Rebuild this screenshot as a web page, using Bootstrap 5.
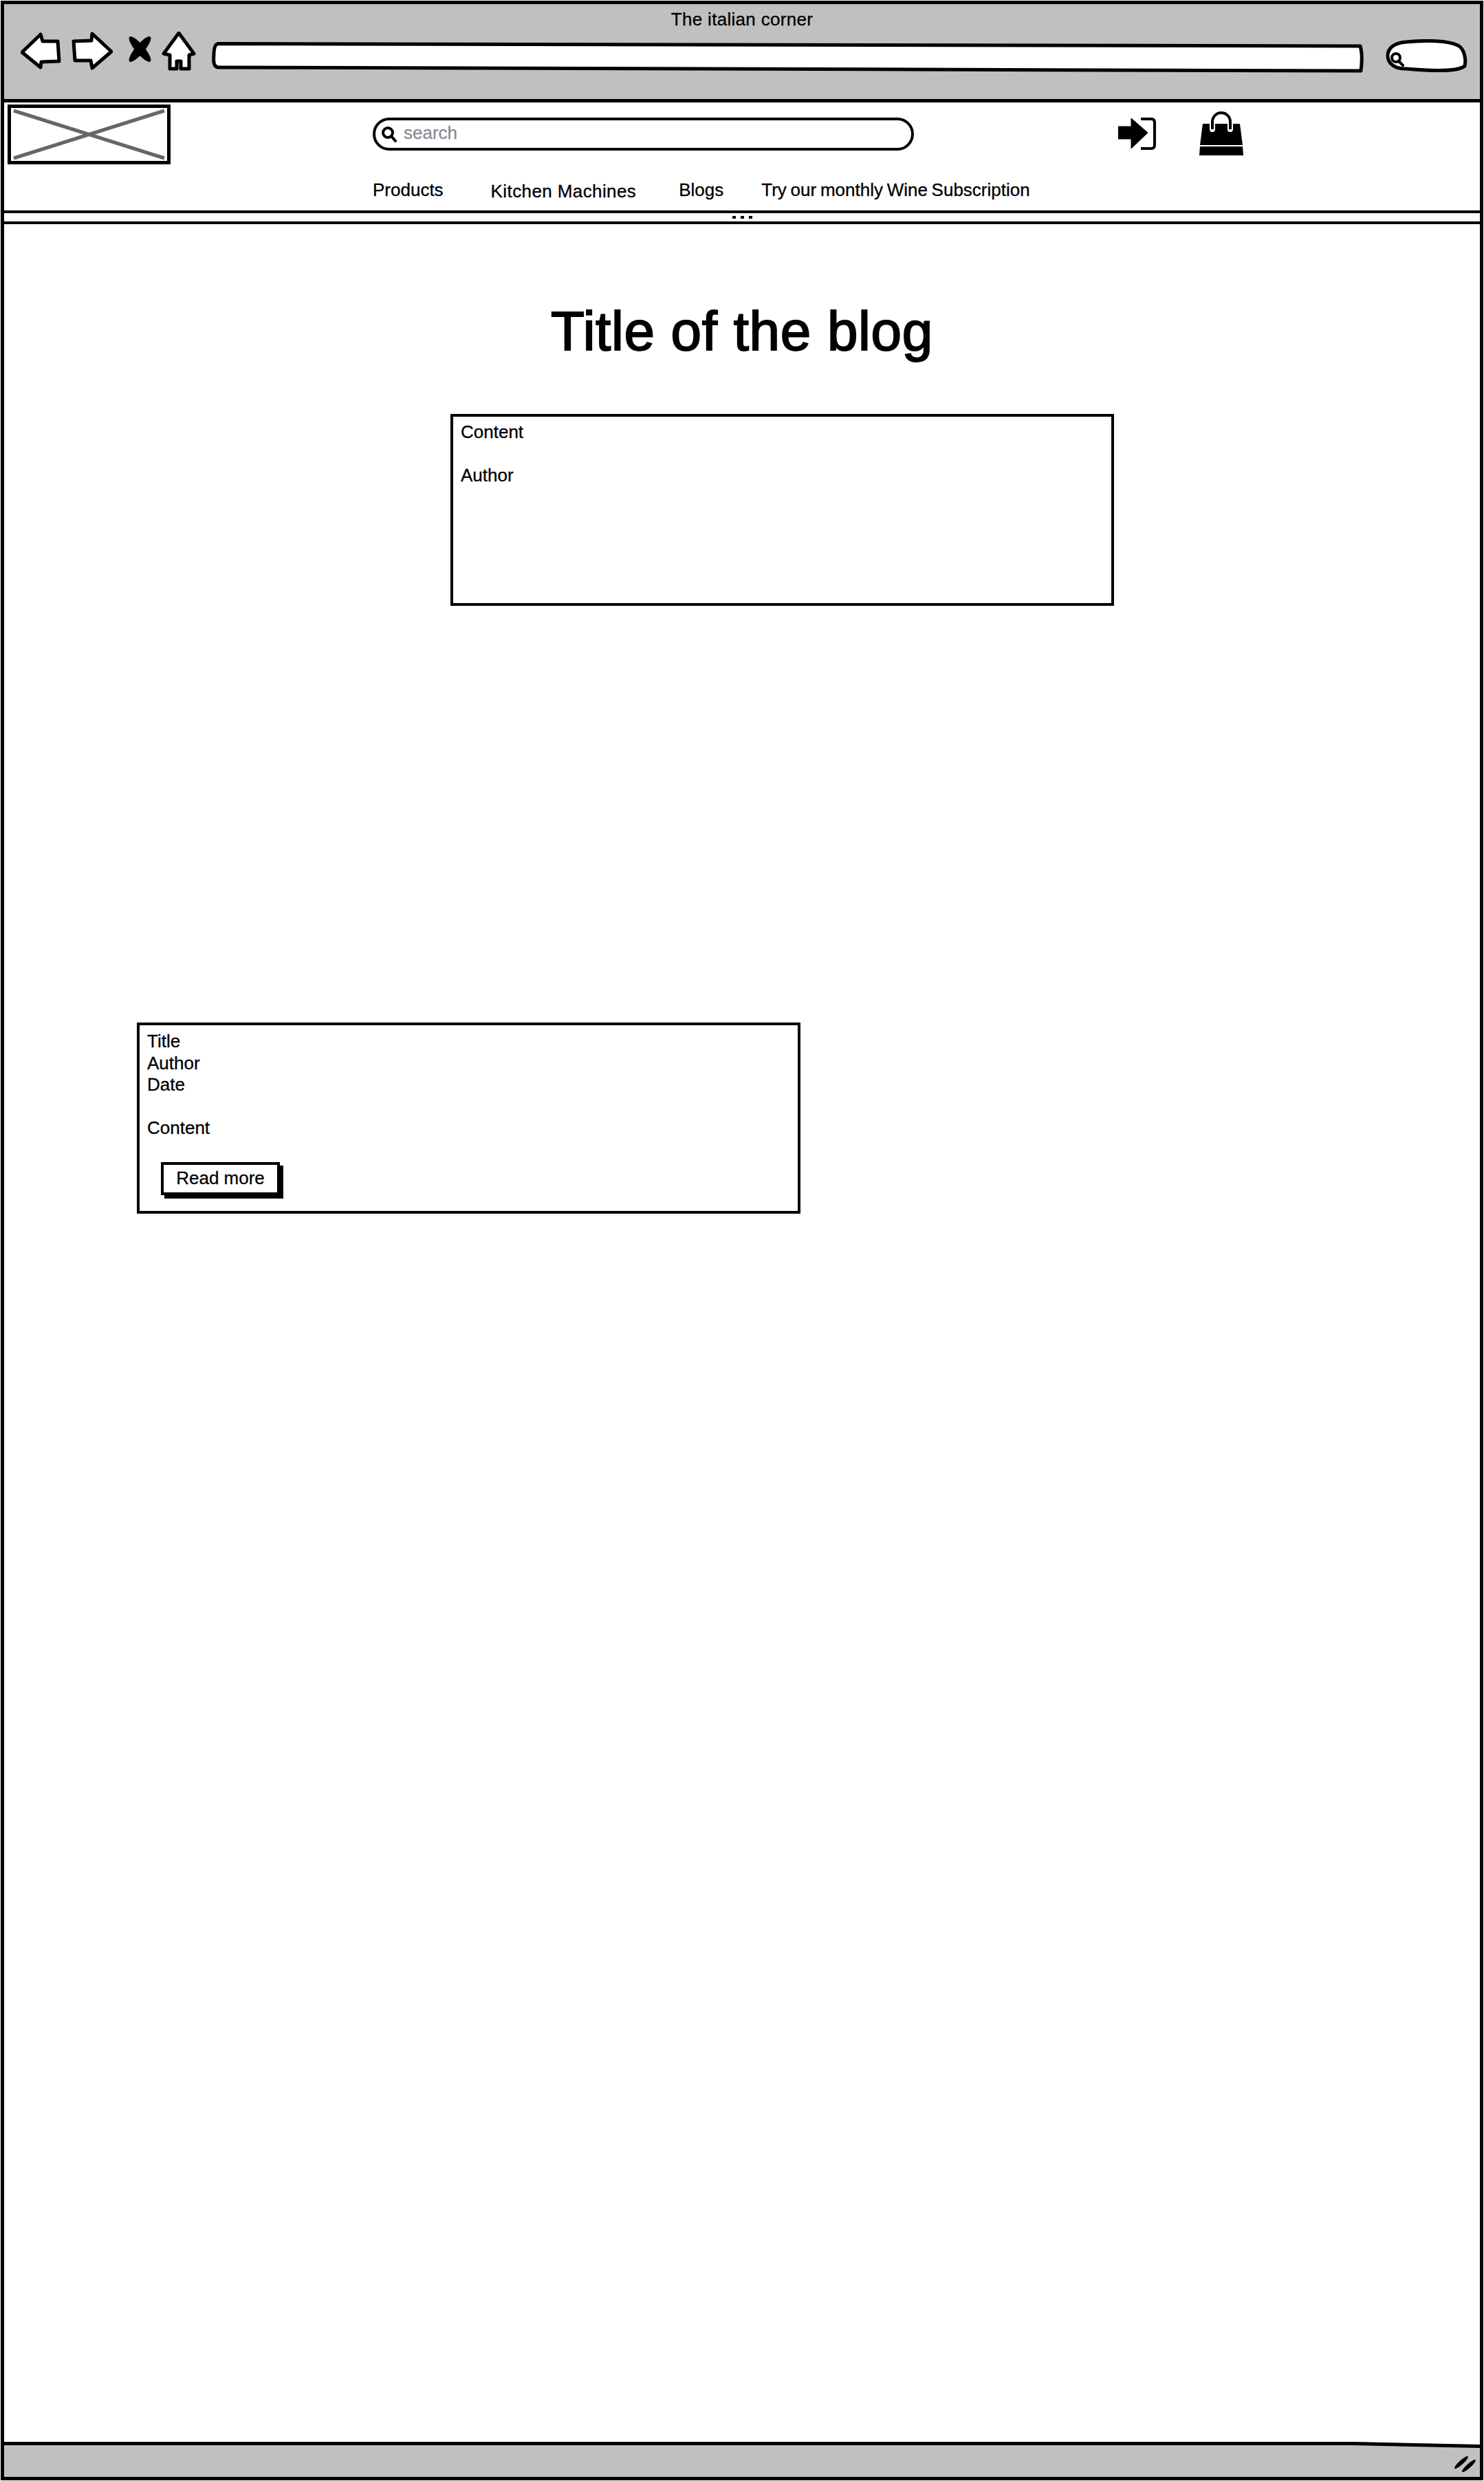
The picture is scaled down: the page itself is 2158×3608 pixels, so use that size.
<!DOCTYPE html>
<html lang="en">
<head>
    <meta charset="UTF-8">
    <meta name="viewport" content="width=device-width, initial-scale=1.0">
    <title>The italian corner - Blog</title>
    <link href="https://cdn.jsdelivr.net/npm/bootstrap@5.3.0/dist/css/bootstrap.min.css" rel="stylesheet">
    <style>
        body { margin: 0; background: #fff; color: #000; font-family: "Liberation Sans", Arial, sans-serif; font-size: 26px; line-height: 31.5px; -webkit-text-stroke: .3px #000; }
        .wire-frame { margin: 1px; height: 3606px; border: 5px solid #000; }
        .wire-browser { height: 143px; background: #c0c0c0; border-bottom: 5px solid #000; }
        .wire-browser-title { height: 41px; padding-top: 7px; letter-spacing: .3px; }
        .wire-controls { padding-left: 24px; height: 67px; }
        .wire-controls svg { display: block; flex: none; }
        .wire-nav-icons { margin-bottom: 13px; }
        .wire-icon-forward { margin-left: 14px; }
        .wire-icon-stop { margin: 0 0 6px 23px; }
        .wire-icon-home { margin-left: 15px; }
        .wire-address { margin: 5px 0 0 23px; }
        .wire-mini-search { margin: 2px 0 0 30px; }
        .wire-header { height: 157px; padding: 3px 0 0 5px; }
        .wire-logo { width: 237px; height: 87px; flex: none; border: 5px solid #000; }
        .wire-logo svg { display: block; width: 100%; height: 100%; }
        .wire-center { width: 1084px; margin-left: 294px; padding-top: 19px; flex: none; }
        .wire-search { width: 787px; height: 48px; padding-left: 8px; border: 4px solid #000; border-radius: 24px; }
        .wire-search span { margin-left: 9px; color: #8b8b96; -webkit-text-stroke: .3px #8b8b96; position: relative; top: -1px; }
        .wire-menu { margin-top: 42px; flex-wrap: nowrap; white-space: nowrap; }
        .wire-menu a { color: #000; text-decoration: none; }
        .wire-menu li:nth-child(2) { margin-left: 69px; padding-top: 2px; letter-spacing: .4px; }
        .wire-menu li:nth-child(3) { margin-left: 62px; }
        .wire-menu li:nth-child(4) { margin-left: 55px; word-spacing: -1.5px; }
        .wire-bag { margin-left: 63px; margin-top: 10px; }
        .wire-login { margin-top: 19px; }
        .wire-strip { box-sizing: content-box; height: 12px; gap: 7px; border-top: 4px solid #000; border-bottom: 4px solid #000; }
        .wire-strip i { display: block; width: 5px; height: 4px; background: #000; }
        .wire-heading { margin: 0; padding-top: 108px; font-size: 80px; font-weight: 500; line-height: 96px; -webkit-text-stroke: 2px #000; letter-spacing: .7px; }
        .wire-box { width: 965px; height: 279px; border: 4px solid #000; border-radius: 0; }
        .wire-box-content { margin: 72px 0 0 649px; padding: 7px 11px; }
        .wire-box-list { margin: 606px 0 0 193px; height: 278px; padding: 8px 11px; }
        .wire-btn { display: block; width: 173px; height: 48px; margin: 33px 0 0 20px; padding: 0; font-size: 26px; line-height: 39px; color: #000; background: #fff; border: 4px solid #000; border-radius: 0; box-shadow: 5px 5px 0 #000; }
        .wire-status { height: 51px; background: #c0c0c0; }
        .wire-status svg { display: block; }
        .wire-grip { padding: 11px 5px 0 0; }
    </style>
</head>
<body>

    <div class="wire-frame d-flex flex-column">

        <!-- Browser chrome -->
        <div class="wire-browser flex-shrink-0">
            <div class="wire-browser-title text-center">The italian corner</div>
            <div class="wire-controls d-flex align-items-center">
                <div class="wire-nav-icons d-flex align-items-center">
                    <svg width="60" height="54" viewBox="0 0 60 54"><path d="M2 29 29 3 32 13H54L56 42 30 43 29 51Z" fill="#fff" stroke="#000" stroke-width="5" stroke-linejoin="round"/></svg>
                    <svg class="wire-icon-forward" width="60" height="56" viewBox="0 0 60 56"><path d="M3 14 29 13 30 3 58 29 30 53 28 42H5Z" fill="#fff" stroke="#000" stroke-width="5" stroke-linejoin="round"/></svg>
                    <svg class="wire-icon-stop" width="33" height="37" viewBox="0 0 33 37"><ellipse cx="16.5" cy="18.5" rx="6.5" ry="23.5" transform="rotate(-40 16.5 18.5)"/><ellipse cx="16.5" cy="18.5" rx="6.5" ry="23.5" transform="rotate(40 16.5 18.5)"/></svg>
                    <svg class="wire-icon-home" width="50" height="57" viewBox="0 0 50 57"><path d="M25 2 47 32 40 34V54H28V43H22V54H12V34L3 32Z" fill="#fff" stroke="#000" stroke-width="5" stroke-linejoin="round"/></svg>
                </div>
                <svg class="wire-address" width="1677" height="46" viewBox="0 0 1677 46"><path d="M10 3.5 1670 7Q1674 20 1671 43L10 38Q1 38 3 20 3 3.5 10 3.5Z" fill="#fff" stroke="#000" stroke-width="5" stroke-linejoin="round"/></svg>
                <svg class="wire-mini-search" width="119" height="49" viewBox="0 0 119 49">
                    <path d="M3 24C3 12 14 5 30 4 60 1 90 2 105 9 115 14 117 30 115 39 105 47 75 47 30 43 15 44 3 36 3 24Z" fill="#fff" stroke="#000" stroke-width="5"/>
                    <circle cx="15" cy="27" r="6" fill="none" stroke="#000" stroke-width="4"/>
                    <path d="M19 32 25 38" stroke="#000" stroke-width="4" stroke-linecap="round"/>
                </svg>
            </div>
        </div>

        <!-- Site header -->
        <header class="wire-header d-flex flex-shrink-0">
            <div class="wire-logo">
                <svg viewBox="0 0 227 77" preserveAspectRatio="none"><path d="M4 4 223 73M4 73 223 4" stroke="#666" stroke-width="5"/></svg>
            </div>
            <div class="wire-center">
                <div class="wire-search d-flex align-items-center">
                    <svg width="24" height="24" viewBox="0 0 24 24"><circle cx="10" cy="10" r="7" fill="none" stroke="#000" stroke-width="4"/><path d="M15 15 21 22" stroke="#000" stroke-width="4" stroke-linecap="round"/></svg>
                    <span>search</span>
                </div>
                <ul class="wire-menu nav">
                    <li><a href="#">Products</a></li>
                    <li><a href="#">Kitchen Machines</a></li>
                    <li><a href="#">Blogs</a></li>
                    <li><a href="#">Try our monthly Wine Subscription</a></li>
                </ul>
            </div>
            <svg class="wire-login flex-shrink-0" width="55" height="47" viewBox="0 0 55 47"><path d="M0 13H19V1L43 22 19 45V31H0Z" stroke="#000" stroke-width="1" stroke-linejoin="round"/><path d="M33 2H48Q53 2 53 7V40Q53 45 48 45H33" fill="none" stroke="#000" stroke-width="4"/></svg>
            <svg class="wire-bag flex-shrink-0" width="64" height="64" viewBox="0 0 64 64">
                <path d="M5 18H59L63 49H1Z"/>
                <path d="M1 51H63L64 64H0Z"/>
                <path d="M19 26V15A13 13 0 0 1 45 15V26" fill="none" stroke="#fff" stroke-width="8" stroke-linecap="round"/>
                <path d="M19 26V15A13 13 0 0 1 45 15V26" fill="none" stroke="#000" stroke-width="4"/>
            </svg>
        </header>

        <!-- Collapsed menu strip -->
        <div class="wire-strip d-flex justify-content-center align-items-center flex-shrink-0">
            <i></i><i></i><i></i>
        </div>

        <!-- Blog content -->
        <main class="flex-grow-1">
            <h1 class="wire-heading text-center">Title of the blog</h1>

            <div class="wire-box wire-box-content">
                Content<br><br>Author
            </div>

            <div class="wire-box wire-box-list">
                Title<br>Author<br>Date<br><br>Content
                <button type="button" class="btn wire-btn">Read more</button>
            </div>
        </main>

        <!-- Status bar -->
        <footer class="wire-status flex-shrink-0">
            <svg width="100%" height="9" viewBox="0 0 2146 9" preserveAspectRatio="none"><path d="M1960 0H2146V4Z" fill="#fff"/><path d="M0 0H1960L2146 4V9L1960 5H0Z"/></svg>
            <div class="wire-grip d-flex justify-content-end">
                <svg width="32" height="25" viewBox="0 0 32 25"><ellipse cx="10" cy="10" rx="13" ry="3" transform="rotate(-42 10 10)"/><ellipse cx="21" cy="15" rx="13" ry="3" transform="rotate(-42 21 15)"/></svg>
            </div>
        </footer>
    </div>

    <script src="https://cdn.jsdelivr.net/npm/bootstrap@5.3.0/dist/js/bootstrap.bundle.min.js"></script>
</body>
</html>
